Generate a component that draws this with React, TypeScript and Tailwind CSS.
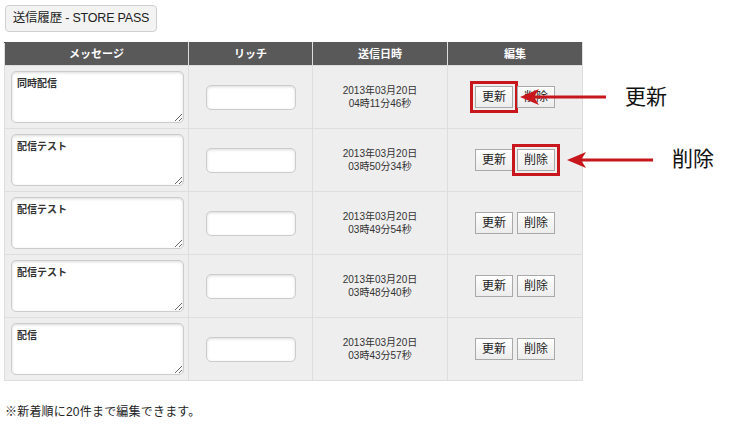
const rows = [
  { msg: '同時配信', d1: '2013年03月20日', d2: '04時11分46秒' },
  { msg: '配信テスト', d1: '2013年03月20日', d2: '03時50分34秒' },
  { msg: '配信テスト', d1: '2013年03月20日', d2: '03時49分54秒' },
  { msg: '配信テスト', d1: '2013年03月20日', d2: '03時48分40秒' },
  { msg: '配信', d1: '2013年03月20日', d2: '03時43分57秒' },
];

const font = { fontFamily: '"Liberation Sans", "Noto Sans CJK JP", sans-serif' };

const Arrow = ({ x, y, len }: { x: number; y: number; len: number }) => (
  <svg className="absolute pointer-events-none" style={{ left: x, top: y - 10 }} width={len} height={20}>
    <line x1={14} y1={10} x2={len} y2={10} stroke="#c8161d" strokeWidth={3} />
    <path d="M0 10 L19 2 L14 10 L19 18 Z" fill="#c8161d" />
  </svg>
);

export default function App() {
  return (
    <div className="relative w-[733px] h-[426px] bg-white text-[#222] px-[4px] pt-[5px]" style={font}>
      <button className="ml-px h-[27px] w-[152px] text-[12.5px] tracking-[-0.2px] text-[#222] bg-[#f3f3f3] border border-[#cfcfcf] rounded-[4px]">
        送信履歴 - STORE PASS
      </button>

      <table className="mt-[10px] w-[578px] table-fixed border-collapse bg-[#eeeeee]">
        <colgroup>
          <col className="w-[184px]" />
          <col className="w-[124px]" />
          <col className="w-[135px]" />
          <col className="w-[135px]" />
        </colgroup>
        <thead>
          <tr className="h-[23px] bg-[#595959] text-white text-[11px] font-bold">
            <th className="border border-[#dedede] border-t-[#595959]">メッセージ</th>
            <th className="border border-[#dedede] border-t-[#595959]">リッチ</th>
            <th className="border border-[#dedede] border-t-[#595959]">送信日時</th>
            <th className="border border-[#dedede] border-t-[#595959]">編集</th>
          </tr>
        </thead>
        <tbody>
          {rows.map((r, i) => (
            <tr key={i} className="h-[63px]">
              <td className="border border-[#dedede] pl-[6px] align-middle">
                <textarea
                  defaultValue={r.msg}
                  className="block w-[173px] h-[52px] text-[10px] font-bold text-[#333] bg-white border border-[#cccccc] rounded-[5px] px-[5px] py-[4px] shadow-[inset_0_1px_3px_rgba(0,0,0,0.15)]"
                  style={font}
                />
              </td>
              <td className="border border-[#dedede] align-middle">
                <input className="block mx-auto w-[90px] h-[25px] bg-white border border-[#cccccc] rounded-[5px] shadow-[inset_0_1px_3px_rgba(0,0,0,0.15)]" />
              </td>
              <td className="border border-[#dedede] text-center text-[10px] leading-[13px] text-[#333] align-middle">
                <div>{r.d1}</div>
                <div>{r.d2}</div>
              </td>
              <td className="border border-[#dedede] align-middle">
                <div className="flex justify-center gap-[4px]">
                  <button
                    className={`h-[22px] w-[38px] text-[12px] text-[#222] bg-gradient-to-b from-white to-[#ececec] border border-[#a9a9a9] ${i === 0 ? 'outline-[3px] outline-solid outline-[#c8161d] outline-offset-[2px]' : ''}`}
                  >
                    更新
                  </button>
                  <button
                    className={`h-[22px] w-[38px] text-[12px] text-[#222] bg-gradient-to-b from-white to-[#ececec] border border-[#a9a9a9] ${i === 1 ? 'outline-[3px] outline-solid outline-[#c8161d] outline-offset-[2px]' : ''}`}
                  >
                    削除
                  </button>
                </div>
              </td>
            </tr>
          ))}
        </tbody>
      </table>

      <p className="mt-[22px] ml-px text-[12px] tracking-[0.2px] text-[#222]">※新着順に20件まで編集できます。</p>

      <Arrow x={520} y={97} len={86} />
      <Arrow x={567} y={160} len={86} />
      <div className="absolute left-[625px] top-[83px] text-[21px] leading-[28px] text-[#111]">更新</div>
      <div className="absolute left-[672px] top-[145px] text-[21px] leading-[28px] text-[#111]">削除</div>
    </div>
  );
}
